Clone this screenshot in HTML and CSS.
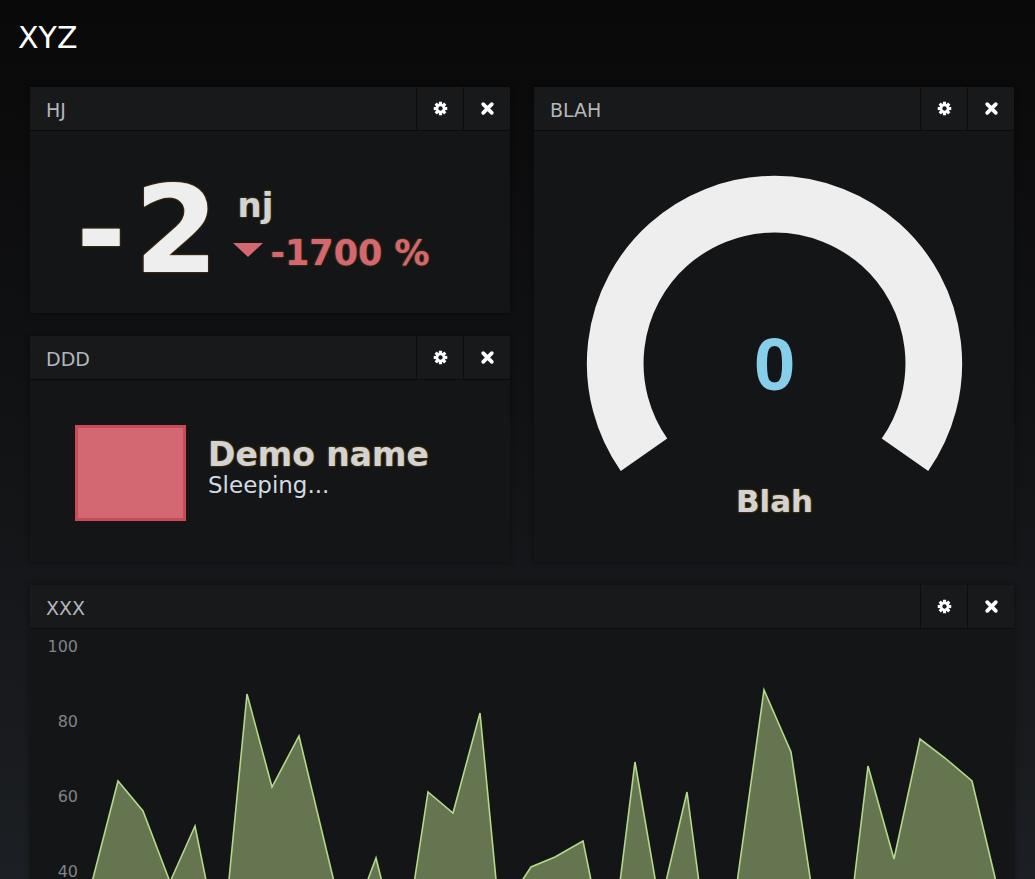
FILE: index.html
```html
<!DOCTYPE html>
<html>
<head>
<meta charset="utf-8">
<title>XYZ</title>
<link rel="stylesheet" href="styles.css">
</head>
<body>
<header class="top">
  <h1 class="title">XYZ</h1>
</header>
<main class="board">
  <section class="panel">
    <div class="panel-head">
      <h2 class="panel-title">HJ</h2>
      <div class="tool"><svg class="ico" viewBox="-8 -8 16 16"><g fill="#fff"><circle r="5.2"/><rect x="-1.7" y="-7.2" width="3.4" height="14.4"/><rect x="-1.7" y="-7.2" width="3.4" height="14.4" transform="rotate(45)"/><rect x="-1.7" y="-7.2" width="3.4" height="14.4" transform="rotate(90)"/><rect x="-1.7" y="-7.2" width="3.4" height="14.4" transform="rotate(135)"/></g><circle r="2.3" fill="#18191b"/></svg></div>
      <div class="tool"><svg class="ico" viewBox="-8 -8 16 16"><g stroke="#fff" stroke-width="4" stroke-linecap="round"><line x1="-4.6" y1="-4.6" x2="4.6" y2="4.6"/><line x1="4.6" y1="-4.6" x2="-4.6" y2="4.6"/></g></svg></div>
    </div>
    <div class="panel-body value-body">
      <div class="big">-2</div>
      <div class="side">
        <div class="unit">nj</div>
        <div class="change"><span class="arrow"></span><span class="pct">-1700 %</span></div>
      </div>
    </div>
  </section>

  <section class="panel tall">
    <div class="panel-head">
      <h2 class="panel-title">BLAH</h2>
      <div class="tool"><svg class="ico" viewBox="-8 -8 16 16"><g fill="#fff"><circle r="5.2"/><rect x="-1.7" y="-7.2" width="3.4" height="14.4"/><rect x="-1.7" y="-7.2" width="3.4" height="14.4" transform="rotate(45)"/><rect x="-1.7" y="-7.2" width="3.4" height="14.4" transform="rotate(90)"/><rect x="-1.7" y="-7.2" width="3.4" height="14.4" transform="rotate(135)"/></g><circle r="2.3" fill="#18191b"/></svg></div>
      <div class="tool"><svg class="ico" viewBox="-8 -8 16 16"><g stroke="#fff" stroke-width="4" stroke-linecap="round"><line x1="-4.6" y1="-4.6" x2="4.6" y2="4.6"/><line x1="4.6" y1="-4.6" x2="-4.6" y2="4.6"/></g></svg></div>
    </div>
    <div class="panel-body">
      <svg class="gauge" width="480" height="431" viewBox="0 0 480 431">
        <path d="M 110.0 323.8 A 159.3 159.3 0 1 1 371.0 323.8" fill="none" stroke="#eeeeee" stroke-width="56.7"/>
        <text class="gauge-val" x="240.5" y="259" text-anchor="middle">0</text>
        <text class="gauge-label" x="240.5" y="381" text-anchor="middle">Blah</text>
      </svg>
    </div>
  </section>

  <section class="panel">
    <div class="panel-head">
      <h2 class="panel-title">DDD</h2>
      <div class="tool"><svg class="ico" viewBox="-8 -8 16 16"><g fill="#fff"><circle r="5.2"/><rect x="-1.7" y="-7.2" width="3.4" height="14.4"/><rect x="-1.7" y="-7.2" width="3.4" height="14.4" transform="rotate(45)"/><rect x="-1.7" y="-7.2" width="3.4" height="14.4" transform="rotate(90)"/><rect x="-1.7" y="-7.2" width="3.4" height="14.4" transform="rotate(135)"/></g><circle r="2.3" fill="#18191b"/></svg></div>
      <div class="tool"><svg class="ico" viewBox="-8 -8 16 16"><g stroke="#fff" stroke-width="4" stroke-linecap="round"><line x1="-4.6" y1="-4.6" x2="4.6" y2="4.6"/><line x1="4.6" y1="-4.6" x2="-4.6" y2="4.6"/></g></svg></div>
    </div>
    <div class="panel-body status-body">
      <div class="swatch"></div>
      <div class="status-text">
        <div class="status-name">Demo name</div>
        <div class="status-sub">Sleeping...</div>
      </div>
    </div>
  </section>

  <section class="panel wide">
    <div class="panel-head">
      <h2 class="panel-title">XXX</h2>
      <div class="tool"><svg class="ico" viewBox="-8 -8 16 16"><g fill="#fff"><circle r="5.2"/><rect x="-1.7" y="-7.2" width="3.4" height="14.4"/><rect x="-1.7" y="-7.2" width="3.4" height="14.4" transform="rotate(45)"/><rect x="-1.7" y="-7.2" width="3.4" height="14.4" transform="rotate(90)"/><rect x="-1.7" y="-7.2" width="3.4" height="14.4" transform="rotate(135)"/></g><circle r="2.3" fill="#18191b"/></svg></div>
      <div class="tool"><svg class="ico" viewBox="-8 -8 16 16"><g stroke="#fff" stroke-width="4" stroke-linecap="round"><line x1="-4.6" y1="-4.6" x2="4.6" y2="4.6"/><line x1="4.6" y1="-4.6" x2="-4.6" y2="4.6"/></g></svg></div>
    </div>
    <div class="panel-body">
      <svg class="chart" width="984" height="400" viewBox="0 0 984 400">
        <g class="axis">
          <text x="48" y="23" text-anchor="end">100</text>
          <text x="48" y="98" text-anchor="end">80</text>
          <text x="48" y="173" text-anchor="end">60</text>
          <text x="48" y="248" text-anchor="end">40</text>
          <text x="48" y="323" text-anchor="end">20</text>
          <text x="48" y="398" text-anchor="end">0</text>
        </g>
        <path class="area" d="M60,261 L88,152 L113,182 L140,253 L165,197 L178,261 L198,261 L217,65 L242,158 L269,107 L306,261 L334,261 L346,229 L354,261 L383,261 L398,163 L423,184 L450,84 L467,261 L486,261 L501,238 L525,228 L553,212 L563,261 L589,261 L605,133 L627,261 L634,261 L657,163 L670,261 L706,261 L734,61 L761,123 L782,261 L823,261 L838,137 L864,230 L890,110 L915,129 L942,152 L968,261 L968,400 L60,400 Z"/>
        <polyline class="line" points="60,261 88,152 113,182 140,253 165,197 178,261 198,261 217,65 242,158 269,107 306,261 334,261 346,229 354,261 383,261 398,163 423,184 450,84 467,261 486,261 501,238 525,228 553,212 563,261 589,261 605,133 627,261 634,261 657,163 670,261 706,261 734,61 761,123 782,261 823,261 838,137 864,230 890,110 915,129 942,152 968,261"/>
      </svg>
    </div>
  </section>
</main>
</body>
</html>
```

FILE: styles.css
```css
html {
  background: #1b1e21 linear-gradient(to bottom, #090909 0px, #0b0b0c 90px, #111214 400px, #1c1f23 879px) no-repeat fixed;
  min-height: 100%;
}
body {
  margin: 0;
  font-family: "DejaVu Sans", Verdana, sans-serif;
  color: #eeeeee;
}
.top {
  height: 87px;
  box-sizing: border-box;
  padding: 23px 0 0 18px;
}
.title {
  margin: 0;
  font-size: 30px;
  font-weight: normal;
  line-height: 1;
  color: #ffffff;
}
.board {
  display: grid;
  grid-template-columns: 480px 480px;
  grid-template-rows: 226px 226px auto;
  column-gap: 24px;
  row-gap: 23px;
  margin-left: 30px;
}
.panel {
  display: flex;
  flex-direction: column;
  background: #141517;
  box-shadow: 0 0 6px rgba(0, 0, 0, 0.45);
}
.tall {
  grid-column: 2;
  grid-row: 1 / span 2;
}
.wide {
  grid-column: 1 / -1;
}
.panel-head {
  display: flex;
  height: 43px;
  background: #18191b;
  border-bottom: 1px solid #0b0b0c;
  flex: none;
}
.panel-title {
  flex: 1;
  margin: 0;
  padding: 4px 0 0 16px;
  line-height: 39px;
  font-size: 19px;
  font-weight: normal;
  color: #b4b7ba;
}
.tool {
  width: 46px;
  border-left: 1px solid #0d0d0e;
  display: flex;
  align-items: center;
  justify-content: center;
}
.ico {
  width: 15px;
  height: 15px;
  display: block;
}
.panel-body {
  flex: 1;
  position: relative;
}
.value-body {
  display: flex;
  align-items: flex-start;
  padding: 39px 0 0 46px;
}
.big {
  font-size: 121px;
  font-weight: bold;
  line-height: 1;
  letter-spacing: 8px;
  color: #eeeeee;
  text-shadow: 0 0 2px rgba(255, 170, 0, 0.55);
}
.side {
  margin: 18px 0 0 7px;
  display: flex;
  flex-direction: column;
}
.unit {
  font-size: 34px;
  font-weight: bold;
  line-height: 1;
  color: #d3d3d3;
  padding-left: 4px;
  text-shadow: 0 0 2px rgba(255, 180, 0, 0.5);
}
.change {
  display: flex;
  align-items: center;
  margin-top: 14px;
}
.arrow {
  width: 0;
  height: 0;
  border-left: 15px solid transparent;
  border-right: 15px solid transparent;
  border-top: 14px solid #d4676f;
  margin: 0 7px 8px 0;
}
.pct {
  font-size: 35px;
  font-weight: bold;
  line-height: 1;
  color: #d4676f;
  text-shadow: 0 0 2px rgba(255, 180, 0, 0.45);
}
.status-body {
  display: flex;
  align-items: flex-start;
  padding: 45px 0 0 45px;
}
.swatch {
  width: 105px;
  height: 90px;
  background: #d46872;
  border: 3px solid #c94b57;
}
.status-text {
  margin: 13px 0 0 22px;
}
.status-name {
  font-size: 33px;
  font-weight: bold;
  line-height: 1;
  color: #d3d3d3;
  text-shadow: 0 0 2px rgba(255, 180, 0, 0.6);
}
.status-sub {
  margin-top: 3px;
  font-size: 23px;
  line-height: 1;
  color: #d2dae2;
}
.gauge {
  display: block;
}
.gauge-val {
  font-family: "Liberation Sans", Arial, sans-serif;
  font-weight: bold;
  font-size: 75px;
  fill: #87ceeb;
}
.gauge-label {
  font-family: "DejaVu Sans", Verdana, sans-serif;
  font-weight: bold;
  font-size: 31px;
  fill: #d3d3d3;
  text-shadow: 0 0 2px rgba(255, 180, 0, 0.6);
}
.chart {
  display: block;
}
.axis text {
  font-family: "DejaVu Sans", Verdana, sans-serif;
  font-size: 16px;
  fill: #808387;
}
.area {
  fill: #65754f;
}
.line {
  fill: none;
  stroke: #b4d98a;
  stroke-width: 1.6;
  stroke-linejoin: miter;
}
```
